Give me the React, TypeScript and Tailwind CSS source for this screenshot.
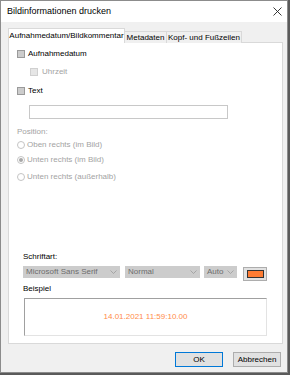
import React from "react";

const font = { fontFamily: '"Liberation Sans", Arial, sans-serif' };

function CheckBox({ label, faded }: { label: string; faded?: boolean }) {
  return (
    <div className="flex items-center h-[12px]">
      <span
        className={
          faded
            ? "w-[8px] h-[8px] border border-[#d0d0d0] bg-[#e6e6e6]"
            : "w-[8px] h-[8px] border border-[#9a9a9a] bg-[#cccccc]"
        }
      />
      <span className={faded ? "ml-[4px] text-[#a3a3a3]" : "ml-[3px] text-black"}>{label}</span>
    </div>
  );
}

function Radio({ label, checked }: { label: string; checked?: boolean }) {
  return (
    <div className="flex items-center h-[12px]">
      <span className="w-[8px] h-[8px] rounded-full border border-[#c4c4c4] bg-white flex items-center justify-center">
        {checked && <span className="w-[4px] h-[4px] rounded-full bg-[#a8a8a8]" />}
      </span>
      <span className="ml-[2px] text-[#a3a3a3]">{label}</span>
    </div>
  );
}

function Select({ value, width }: { value: string; width: string }) {
  return (
    <div className={`${width} h-[12px] bg-[#cccccc] flex items-center justify-between pl-[3px] pr-[3px] text-[#6d6d6d]`}>
      <span>{value}</span>
      <svg width="7" height="4" viewBox="0 0 7 4" fill="none" stroke="#9a9a9a" strokeWidth="0.8">
        <path d="M0.5 0.5 L3.5 3.5 L6.5 0.5" />
      </svg>
    </div>
  );
}

export default function App() {
  return (
    <div className="w-[290px] h-[375px] bg-[#5a5a5a] text-[8px] leading-none" style={font}>
      <div className="w-[288px] h-[373px] border border-[#8c8c8c] bg-[#f0f0f0] flex flex-col">
        {/* title bar */}
        <div className="h-[21px] bg-white flex items-center justify-between pl-[6px] pr-[5px]">
          <span className="text-[9px] text-black">Bildinformationen drucken</span>
          <svg width="9" height="9" viewBox="0 0 9 9" stroke="#222" strokeWidth="0.9">
            <path d="M0.5 0.5 L8.5 8.5 M8.5 0.5 L0.5 8.5" />
          </svg>
        </div>

        {/* tabs */}
        <div className="pl-[7px] pt-[6px] flex items-end h-[21px] relative z-10">
          <div className="h-[15px] w-[117px] bg-white border border-b-0 border-[#d9d9d9] flex items-center justify-center text-black">
            Aufnahmedatum/Bildkommentar
          </div>
          <div className="h-[12px] w-[42px] bg-[#f0f0f0] border border-l-0 border-b-0 border-[#d9d9d9] flex items-center justify-center text-black">
            Metadaten
          </div>
          <div className="h-[12px] w-[75px] bg-[#f0f0f0] border border-l-0 border-b-0 border-[#d9d9d9] flex items-center justify-center text-black">
            Kopf- und Fußzeilen
          </div>
        </div>

        {/* panel */}
        <div className="ml-[7px] w-[275px] h-[302px] -mt-[1px] bg-white border border-[#d9d9d9] flex flex-col pl-[8px]">
          <div className="mt-[5px]">
            <CheckBox label="Aufnahmedatum" />
          </div>
          <div className="mt-[6px] ml-[13px]">
            <CheckBox label="Uhrzeit" faded />
          </div>
          <div className="mt-[7px]">
            <CheckBox label="Text" />
          </div>
          <div className="mt-[8px] ml-[12px] w-[199px] h-[14px] border border-[#c8c8c8] bg-white" />
          <div className="mt-[7px] h-[12px] flex items-center text-[#a3a3a3]">Position:</div>
          <div className="mt-[1px]">
            <Radio label="Oben rechts (im Bild)" />
          </div>
          <div className="mt-[3px]">
            <Radio label="Unten rechts (im Bild)" checked />
          </div>
          <div className="mt-[5px]">
            <Radio label="Unten rechts (außerhalb)" />
          </div>

          <div className="mt-[68px] ml-[6px] h-[12px] flex items-center text-black">Schriftart:</div>
          <div className="mt-[3px] ml-[6px] flex items-start">
            <Select value="Microsoft Sans Serif" width="w-[97px]" />
            <div className="ml-[5px]">
              <Select value="Normal" width="w-[75px]" />
            </div>
            <div className="ml-[4px]">
              <Select value="Auto" width="w-[33px]" />
            </div>
            <div className="ml-[6px] mt-[1px] w-[24px] h-[14px] bg-[#e1e1e1] border border-[#adadad] flex items-center justify-center">
              <span className="w-[17px] h-[8px] bg-[#ff7c33] border border-[#333]" />
            </div>
          </div>
          <div className="mt-[2px] ml-[6px] h-[12px] flex items-center text-black">Beispiel</div>
          <div className="mt-[3px] ml-[7px] w-[243px] h-[38px] bg-white border border-[#e3e3e3] border-t-[#a0a0a0] border-l-[#a0a0a0] flex items-center justify-center">
            <span className="text-[#ff8c4a]">14.01.2021 11:59:10.00</span>
          </div>
        </div>

        {/* buttons */}
        <div className="mt-[8px] flex justify-end pr-[6px]">
          <button className="w-[48px] h-[15px] bg-[#e1e1e1] border border-[#0078d7] text-black flex items-center justify-center">
            OK
          </button>
          <button className="ml-[10px] w-[48px] h-[15px] bg-[#e1e1e1] border border-[#adadad] text-black flex items-center justify-center">
            Abbrechen
          </button>
        </div>
      </div>
    </div>
  );
}
